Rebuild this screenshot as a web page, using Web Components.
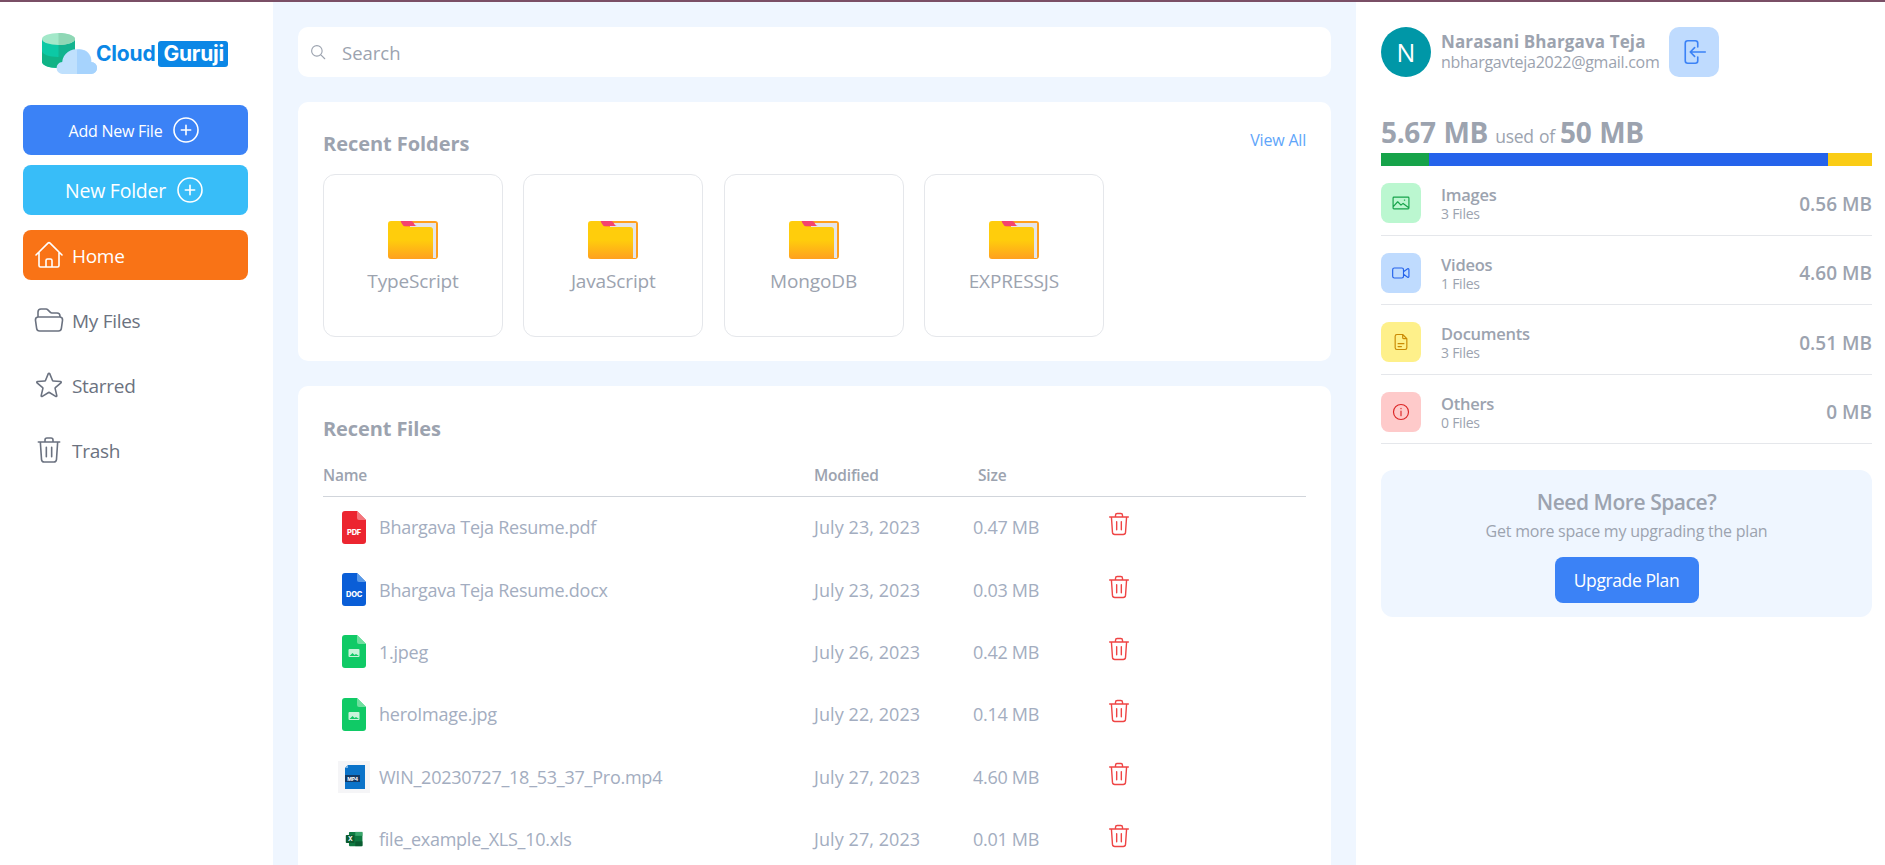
<!DOCTYPE html>
<html>
<head>
<meta charset="utf-8">
<title>Cloud Guruji</title>
<style>
  html, body { margin: 0; height: 100%; overflow: hidden; background: #fff; }
  body { font-family: "Open Sans", "Noto Sans", sans-serif; }
</style>
</head>
<body>
<app-shell>
  <app-sidebar slot="left">
    <app-logo></app-logo>
    <action-button color="#3b82f6" size="16">Add New File</action-button>
    <action-button color="#38bdf8" size="19.5">New Folder</action-button>
    <nav-item icon="home" active>Home</nav-item>
    <nav-item icon="folder">My Files</nav-item>
    <nav-item icon="star">Starred</nav-item>
    <nav-item icon="trash">Trash</nav-item>
  </app-sidebar>

  <search-bar></search-bar>
  <recent-folders>
    <folder-card name="TypeScript"></folder-card>
    <folder-card name="JavaScript"></folder-card>
    <folder-card name="MongoDB"></folder-card>
    <folder-card name="EXPRESSJS"></folder-card>
  </recent-folders>
  <recent-files>
    <file-row type="pdf" name="Bhargava Teja Resume.pdf" date="July 23, 2023" size="0.47 MB"></file-row>
    <file-row type="doc" name="Bhargava Teja Resume.docx" date="July 23, 2023" size="0.03 MB"></file-row>
    <file-row type="img" name="1.jpeg" date="July 26, 2023" size="0.42 MB"></file-row>
    <file-row type="img" name="heroImage.jpg" date="July 22, 2023" size="0.14 MB"></file-row>
    <file-row type="mp4" name="WIN_20230727_18_53_37_Pro.mp4" date="July 27, 2023" size="4.60 MB"></file-row>
    <file-row type="xls" name="file_example_XLS_10.xls" date="July 27, 2023" size="0.01 MB"></file-row>
  </recent-files>

  <storage-panel slot="right">
    <storage-row icon="image" bg="#bbf7d0" fg="#16a34a" name="Images" count="3 Files" amount="0.56 MB"></storage-row>
    <storage-row icon="video" bg="#bfdbfe" fg="#2563eb" name="Videos" count="1 Files" amount="4.60 MB"></storage-row>
    <storage-row icon="doc" bg="#fef08a" fg="#ca8a04" name="Documents" count="3 Files" amount="0.51 MB"></storage-row>
    <storage-row icon="info" bg="#fecaca" fg="#dc2626" name="Others" count="0 Files" amount="0 MB"></storage-row>
  </storage-panel>
</app-shell>

<script>
const ICONS = {
  home: 'M2.25 12l8.954-8.955c.44-.439 1.152-.439 1.591 0L21.75 12M4.5 9.75v10.125c0 .621.504 1.125 1.125 1.125H9.75v-4.875c0-.621.504-1.125 1.125-1.125h2.25c.621 0 1.125.504 1.125 1.125V21h4.125c.621 0 1.125-.504 1.125-1.125V9.75M8.25 21h8.25',
  folder: 'M3.75 9.776c.112-.017.227-.026.344-.026h15.812c.117 0 .232.009.344.026m-16.5 0a2.25 2.25 0 00-1.883 2.542l.857 6a2.25 2.25 0 002.227 1.932H19.05a2.25 2.25 0 002.227-1.932l.857-6a2.25 2.25 0 00-1.883-2.542m-16.5 0V6A2.25 2.25 0 016 3.75h3.879a1.5 1.5 0 011.06.44l2.122 2.12a1.5 1.5 0 001.06.44H18A2.25 2.25 0 0120.25 9v.776',
  star: 'M11.48 3.499a.562.562 0 011.04 0l2.125 5.111a.563.563 0 00.475.345l5.518.442c.499.04.701.663.321.988l-4.204 3.602a.563.563 0 00-.182.557l1.285 5.385a.562.562 0 01-.84.61l-4.725-2.885a.562.562 0 00-.586 0L6.982 20.54a.562.562 0 01-.84-.61l1.285-5.386a.562.562 0 00-.182-.557l-4.204-3.602a.563.563 0 01.321-.988l5.518-.442a.563.563 0 00.475-.345L11.48 3.5z',
  trash: 'M4 6h16M9 6V4.5A1.5 1.5 0 0110.5 3h3A1.5 1.5 0 0115 4.5V6M5.5 6l.9 13.2A2 2 0 008.4 21h7.2a2 2 0 002-1.8L18.5 6M10 10v7M14 10v7',
  plus: 'M12 3a9 9 0 100 18 9 9 0 000-18zM12 8.5v7M8.5 12h7',
  search: 'M10.5 3.5a7 7 0 100 14 7 7 0 000-14zM15.5 15.5L21 21',
  logout: 'M15 8V5a2 2 0 00-2-2H7a2 2 0 00-2 2v14a2 2 0 002 2h6a2 2 0 002-2v-3M21 12H9M12.5 8.5L9 12l3.5 3.5',
  image: 'M3.5 5h17a1 1 0 011 1v12a1 1 0 01-1 1h-17a1 1 0 01-1-1V6a1 1 0 011-1zM3 16l5-5.5 4 4 2.5-2 6.5 5M16 8.5h.5',
  video: 'M4 6h9a2 2 0 012 2v8a2 2 0 01-2 2H4a2 2 0 01-2-2V8a2 2 0 012-2zM15 10.5L20 7a1 1 0 011.5.8v8.4a1 1 0 01-1.500.8L15 13.500',
  doc: 'M7 3h7l5 5v11a2 2 0 01-2 2H7a2 2 0 01-2-2V5a2 2 0 012-2zM14 3v3.500A1.500 1.500 0 0015.500 8H19M8.500 14h7M8.500 17.500h4',
  info: 'M12 3a9 9 0 100 18 9 9 0 000-18zM12 11v5.500M12 7.500v.5'
};

function icon(name, size, width = 1.5) {
  return `<svg width="${size}" height="${size}" viewBox="0 0 24 24" fill="none" stroke="currentColor"
    stroke-width="${width}" stroke-linecap="round" stroke-linejoin="round" style="display:block;flex:none"><path d="${ICONS[name]}"/></svg>`;
}

class AppShell extends HTMLElement {
  constructor() {
    super();
    this.attachShadow({ mode: 'open' }).innerHTML = `
      <style>
        :host {
          display: grid;
          grid-template-columns: 273px 1083px 1fr;
          height: 865px;
          overflow: hidden;
          box-sizing: border-box;
          border-top: 2px solid #7a4f66;
        }
        main {
          background: #eff6ff;
          padding: 25px 25px 0 25px;
          display: flex;
          flex-direction: column;
          gap: 25px;
          overflow: hidden;
        }
      </style>
      <slot name="left"></slot>
      <main><slot></slot></main>
      <slot name="right"></slot>
    `;
  }
}

class AppSidebar extends HTMLElement {
  constructor() {
    super();
    this.attachShadow({ mode: 'open' }).innerHTML = `
      <style>
        :host {
          display: flex;
          flex-direction: column;
          padding: 31px 25px 0 23px;
          background: #fff;
        }
      </style>
      <slot></slot>
    `;
  }
}

class AppLogo extends HTMLElement {
  constructor() {
    super();
    this.attachShadow({ mode: 'open' }).innerHTML = `
      <style>
        :host {
          display: flex;
          height: 41px;
          margin: 0 0 31px 19px;
          font: 700 21px/26px Inter, Roboto, sans-serif;
        }
        svg { flex: none; }
        .word { display: flex; align-items: center; height: 26px; margin-top: 8px; margin-left: -1px; }
        .cloud { color: #0b87e6; letter-spacing: -.2px; }
        .guruji { color: #fff; background: #0b87e6; border-radius: 3px; padding: 0 4px 0 5px; margin-left: 3px; letter-spacing: -.2px; }
      </style>
      <svg width="55" height="41" viewBox="0 0 55 41">
        <path d="M0 6v23c0 3 7 6 16 6s17-3 17-6V6z" fill="#0cc9a5"/>
        <path d="M16.500 6H33v23c0 3-8 6-16.500 6z" fill="#12b38f"/>
        <path d="M0 18v11c0 3 7 6 16 6s17-3 17-6V18c0 3-8 6-17 6S0 21 0 18z" fill="#10b386"/>
        <ellipse cx="16.500" cy="6" rx="16.500" ry="6" fill="#a3e8c9"/>
        <path d="M16.500 0C25.500 0 33 2.700 33 6s-7.500 6-16.500 6z" fill="#8fd7b5"/>
        <path d="M21 41a6 6 0 01-.8-12 14 14 0 0117-12.500 11 11 0 0112 12.500A6 6 0 0149 41z" fill="#bfe0fd"/>
        <path d="M35 16.500A12 12 0 0149.200 29 6 6 0 0149 41H35z" fill="#a6d3fd"/>
      </svg>
      <div class="word"><span class="cloud">Cloud</span><span class="guruji">Guruji</span></div>
    `;
  }
}

class ActionButton extends HTMLElement {
  constructor() {
    super();
    this.attachShadow({ mode: 'open' }).innerHTML = `
      <style>
        :host {
          display: flex;
          height: 50px;
          margin-bottom: 10px;
          align-items: center;
          justify-content: center;
          gap: 8px;
          border-radius: 8px;
          color: #fff;
          background: var(--bg);
          font-size: var(--fs);
          letter-spacing: -.25px;
        }
        span { padding-top: 1px; }
      </style>
      <span><slot></slot></span>${icon('plus', 32, 1.2)}
    `;
  }
  connectedCallback() {
    this.style.setProperty('--bg', this.getAttribute('color'));
    this.style.setProperty('--fs', this.getAttribute('size') + 'px');
  }
}

class NavItem extends HTMLElement {
  constructor() {
    super();
    this.attachShadow({ mode: 'open' });
  }
  connectedCallback() {
    this.shadowRoot.innerHTML = `
      <style>
        :host {
          display: flex;
          height: 50px;
          margin-bottom: 15px;
          padding-left: 10px;
          align-items: center;
          gap: 7px;
          border-radius: 8px;
          color: #6b7280;
          font-size: 19px;
          letter-spacing: -.3px;
        }
        :host([active]) {
          background: #f97316;
          color: #fff;
          margin-top: 5px;
        }
        span { padding-top: 2px; }
      </style>
      ${icon(this.getAttribute('icon'), 32, 1.2)}
      <span><slot></slot></span>
    `;
  }
}

class SearchBar extends HTMLElement {
  constructor() {
    super();
    this.attachShadow({ mode: 'open' }).innerHTML = `
      <style>
        :host {
          display: flex;
          flex: none;
          height: 50px;
          padding-left: 11px;
          align-items: center;
          gap: 15px;
          background: #fff;
          border-radius: 10px;
          color: #9ca3af;
          font-size: 18.5px;
        }
      </style>
      ${icon('search', 18, 1.5)}<span>Search</span>
    `;
  }
}

class RecentFolders extends HTMLElement {
  constructor() {
    super();
    this.attachShadow({ mode: 'open' }).innerHTML = `
      <style>
        :host {
          display: block;
          flex: none;
          height: 259px;
          box-sizing: border-box;
          padding: 25px 25px 0 25px;
          background: #fff;
          border-radius: 10px;
          color: #9ca3af;
        }
        .head { display: flex; justify-content: space-between; height: 47px; }
        h2 { margin: 3px 0 0; font-size: 20px; line-height: 28px; font-weight: 700; letter-spacing: -.05px; height: 44px; }
        a { color: #60a5fa; font-size: 16px; line-height: 26px; letter-spacing: -.2px; }
        .grid { display: flex; gap: 20.3px; }
      </style>
      <div class="head"><h2>Recent Folders</h2><a>View All</a></div>
      <div class="grid"><slot></slot></div>
    `;
  }
}

class FolderCard extends HTMLElement {
  constructor() {
    super();
    this.attachShadow({ mode: 'open' });
  }
  connectedCallback() {
    this.shadowRoot.innerHTML = `
      <style>
        :host {
          display: flex;
          flex-direction: column;
          align-items: center;
          box-sizing: border-box;
          width: 180px;
          height: 163px;
          padding-top: 46px;
          border: 1px solid #e5e7eb;
          border-radius: 12px;
          color: #9ca3af;
          font-size: 19px;
          letter-spacing: -.14px;
        }
        span { margin-top: 6px; line-height: 30px; }
      </style>
      <svg width="50" height="39" viewBox="0 0 50 39">
        <defs>
          <linearGradient id="f" x1="0" y1="0" x2="0" y2="1">
            <stop offset=".5" stop-color="#ffcd0c"/><stop offset="1" stop-color="#ffa01f"/>
          </linearGradient>
        </defs>
        <rect x="10" width="40" height="38" rx="3" fill="#ff9f1f"/>
        <rect x="22" y="2" width="26" height="35" fill="#e4e5ea"/>
        <path d="M13 0h10c3 0 3 5 6 5H13z" fill="#f4436f"/>
        <path d="M3 0h8c3 0 3 6 7 6h24a3 3 0 013 3v29H3a3 3 0 01-3-3V3a3 3 0 013-3z" fill="url(#f)"/>
      </svg>
      <span>${this.getAttribute('name')}</span>
    `;
  }
}

class RecentFiles extends HTMLElement {
  constructor() {
    super();
    this.attachShadow({ mode: 'open' }).innerHTML = `
      <style>
        :host {
          display: block;
          flex: 1 0 auto;
          box-sizing: border-box;
          padding: 25px 25px 30px 25px;
          background: #fff;
          border-radius: 10px 10px 0 0;
          color: #9ca3af;
        }
        h2 { margin: 4px 0 0; font-size: 20px; line-height: 28px; font-weight: 700; letter-spacing: -.1px; }
        .cols {
          display: grid;
          grid-template-columns: 491px 164px 1fr;
          margin-top: 22px;
          height: 31px;
          margin-bottom: -1px;
          border-bottom: 1px solid #d1d5db;
          font-size: 15.500px;
          font-weight: 600;
          line-height: 20px;
          letter-spacing: -.2px;
        }
      </style>
      <h2>Recent Files</h2>
      <div class="cols"><span>Name</span><span>Modified</span><span>Size</span></div>
      <slot></slot>
    `;
  }
}

const FILE_ICONS = {
  pdf: ['#ec2530', '#f4767c', 'PDF'],
  doc: ['#0a5ed7', '#5a9ae8', 'DOC']
};

function fileIcon(type) {
  if (type === 'mp4') {
    return `<svg width="32" height="32" viewBox="0 0 32 32">
      <rect width="32" height="32" fill="#f5f5f7"/>
      <path d="M10 4h17v24H7V7z" fill="#0b73c9"/>
      <path d="M10 4v3H7z" fill="#7db6e6"/>
      <rect x="7" y="14" width="15" height="7" fill="#123a66"/>
      <text x="14.500" y="19.500" font-family="Inter" font-weight="700" font-size="5" text-anchor="middle" fill="#fff">MP4</text>
    </svg>`;
  }
  if (type === 'xls') {
    return `<svg width="19" height="16" viewBox="0 0 24 20">
      <rect x="5" y="1" width="17" height="18" rx="1" fill="#0f7a41"/>
      <rect x="13" y="1" width="9" height="5" fill="#3aa66b"/>
      <rect x="13" y="13" width="9" height="6" fill="#0a5c31"/>
      <rect x="1" y="5" width="11" height="10" rx="1" fill="#0b5c30"/>
      <text x="6.500" y="13" font-family="Inter" font-weight="700" font-size="8" text-anchor="middle" fill="#fff">X</text>
    </svg>`;
  }
  if (type === 'img') {
    return `<svg width="24" height="33" viewBox="0 0 24 33">
      <path d="M3 0h12l9 9v21a3 3 0 01-3 3H3a3 3 0 01-3-3V3a3 3 0 013-3z" fill="#10ca66"/>
      <path d="M15 0l9 9h-7a2 2 0 01-2-2z" fill="#70df9f"/>
      <rect x="6.500" y="14" width="11" height="8" rx="1" fill="#c9f3da"/>
      <path d="M7.500 21l3-3 2 2 1.500-1 3 2z" fill="#10ca66"/>
    </svg>`;
  }
  const [fill, ear, label] = FILE_ICONS[type];
  return `<svg width="24" height="33" viewBox="0 0 24 33">
    <path d="M3 0h12l9 9v21a3 3 0 01-3 3H3a3 3 0 01-3-3V3a3 3 0 013-3z" fill="${fill}"/>
    <path d="M15 0l9 9h-7a2 2 0 01-2-2z" fill="${ear}"/>
    <text x="12" y="24" font-family="Inter" font-weight="800" font-size="7.500" text-anchor="middle" fill="#fff">${label}</text>
  </svg>`;
}

class FileRow extends HTMLElement {
  constructor() {
    super();
    this.attachShadow({ mode: 'open' });
  }
  connectedCallback() {
    const type = this.getAttribute('type');
    this.shadowRoot.innerHTML = `
      <style>
        :host {
          display: grid;
          grid-template-columns: 491px 159px 137px 30px;
          height: 62.400px;
          align-items: center;
          color: #a3adc0;
          font-size: 18px;
          letter-spacing: -.25px;
        }
        .name { display: flex; align-items: center; }
        .ico { width: 32px; margin: 0 9px 0 15px; display: flex; justify-content: center; }
        .date { letter-spacing: .08px; }
        .size { letter-spacing: -.3px; }
        .del { color: #ef4444; margin: -6px 0 0 -5px; }
      </style>
      <div class="name"><div class="ico">${fileIcon(type)}</div><span>${this.getAttribute('name')}</span></div>
      <span class="date">${this.getAttribute('date')}</span>
      <span class="size">${this.getAttribute('size')}</span>
      <div class="del">${icon('trash', 28, 1.2)}</div>
    `;
  }
}

class StoragePanel extends HTMLElement {
  constructor() {
    super();
    this.attachShadow({ mode: 'open' }).innerHTML = `
      <style>
        :host {
          display: block;
          padding: 25px 13px 0 25px;
          background: #fff;
          color: #9ca3af;
        }
        .user { display: flex; align-items: center; height: 50px; }
        .avatar {
          width: 50px; height: 50px; border-radius: 50%;
          background: #0097a7; color: #fff;
          display: flex; align-items: center; justify-content: center;
          font-size: 25px; flex: none;
        }
        .who { margin-left: 10px; }
        .who b { display: block; font-size: 17px; line-height: 21px; letter-spacing: .13px; }
        .who span { display: block; font-size: 16px; line-height: 21px; letter-spacing: -.28px; }
        .logout {
          width: 50px; height: 50px; border-radius: 10px; margin-left: 10px;
          background: #bfdbfe; color: #3b82f6;
          display: flex; align-items: center; justify-content: center;
        }
        .used { margin-top: 30px; height: 46px; display: flex; align-items: flex-end; }
        .used p { margin: 0; font-size: 17.500px; line-height: 33px; letter-spacing: -.3px; word-spacing: 1px; }
        .used b { font-size: 28px; letter-spacing: -.35px; margin-right: 2px; }
        .bar { display: flex; height: 13px; }
        .bar i { display: block; }
        .promo {
          margin-top: 26px;
          height: 147px;
          box-sizing: border-box;
          padding-top: 18px;
          background: #eff6ff;
          border-radius: 12px;
          text-align: center;
        }
        .promo h3 { margin: 0; font-size: 21px; line-height: 28px; font-weight: 600; letter-spacing: -.45px; }
        .promo p { margin: 2px 0 0; font-size: 16px; line-height: 26px; letter-spacing: -.23px; }
        .promo button {
          margin-top: 13px; width: 144px; height: 46px;
          border: 0; border-radius: 8px;
          background: #3b82f6; color: #fff;
          font: 17.500px "Open Sans", sans-serif;
          letter-spacing: -.4px;
        }
      </style>
      <div class="user">
        <div class="avatar">N</div>
        <div class="who"><b>Narasani Bhargava Teja</b><span>nbhargavteja2022@gmail.com</span></div>
        <div class="logout">${icon('logout', 30, 1.300)}</div>
      </div>
      <div class="used"><p><b>5.67 MB</b> used of <b>50 MB</b></p></div>
      <div class="bar">
        <i style="width:48px;background:#16a34a"></i>
        <i style="width:399px;background:#2563eb"></i>
        <i style="width:44px;background:#facc15"></i>
      </div>
      <slot></slot>
      <div class="promo">
        <h3>Need More Space?</h3>
        <p>Get more space my upgrading the plan</p>
        <button>Upgrade Plan</button>
      </div>
    `;
  }
}

class StorageRow extends HTMLElement {
  constructor() {
    super();
    this.attachShadow({ mode: 'open' });
  }
  connectedCallback() {
    this.shadowRoot.innerHTML = `
      <style>
        :host {
          display: flex;
          align-items: center;
          height: 69.500px;
          box-sizing: border-box;
          padding: 17px 0 11.500px;
          border-bottom: 1px solid #e5e7eb;
        }
        .box {
          width: 40px; height: 40px; border-radius: 8px; flex: none;
          display: flex; align-items: center; justify-content: center;
          background: ${this.getAttribute('bg')};
          color: ${this.getAttribute('fg')};
        }
        .txt { margin-left: 20px; flex: 1; }
        b { display: block; font-size: 16.500px; font-weight: 600; line-height: 21px; letter-spacing: -.25px; }
        small { display: block; font-size: 14px; line-height: 17px; letter-spacing: -.25px; }
        .amt { font-size: 19px; font-weight: 600; padding-top: 1px; }
      </style>
      <div class="box">${icon(this.getAttribute('icon'), 20, 1.400)}</div>
      <div class="txt"><b>${this.getAttribute('name')}</b><small>${this.getAttribute('count')}</small></div>
      <span class="amt">${this.getAttribute('amount')}</span>
    `;
  }
}

customElements.define('app-shell', AppShell);
customElements.define('app-sidebar', AppSidebar);
customElements.define('app-logo', AppLogo);
customElements.define('action-button', ActionButton);
customElements.define('nav-item', NavItem);
customElements.define('search-bar', SearchBar);
customElements.define('recent-folders', RecentFolders);
customElements.define('folder-card', FolderCard);
customElements.define('recent-files', RecentFiles);
customElements.define('file-row', FileRow);
customElements.define('storage-panel', StoragePanel);
customElements.define('storage-row', StorageRow);
</script>
</body>
</html>
